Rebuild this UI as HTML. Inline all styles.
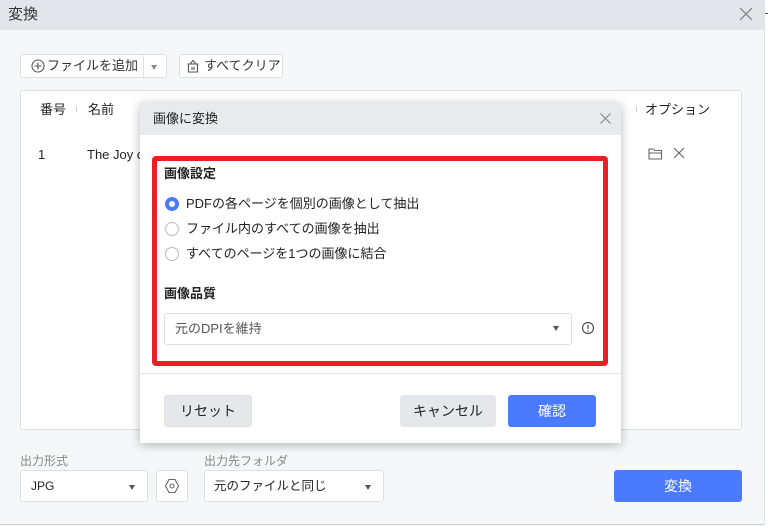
<!DOCTYPE html>
<html><head><meta charset="utf-8"><style>
*{box-sizing:border-box;margin:0;padding:0}
body{width:769px;height:527px;overflow:hidden;background:#fff;font-family:"Liberation Sans","Noto Sans CJK JP",sans-serif;font-size:13px;color:#222;position:relative}
.a{position:absolute;line-height:1.2}
.win{left:0;top:0;width:765px;height:525px;background:#f6f7f9;border-bottom:1px solid #ccc;border-right:1px solid #e2e2e2}
.tb{left:0;top:0;width:765px;height:30px;background:#e4e5ea}
.btn{border:1px solid #dcdfe5;border-radius:3px;background:#fff}
.sel{border:1px solid #dcdfe5;border-radius:3px;background:#fff}
.tri{width:0;height:0;border-left:3.5px solid transparent;border-right:3.5px solid transparent;border-top:5px solid #555}
.radio{width:14px;height:14px;border-radius:50%;border:1px solid #bbb;background:#fff}
</style></head><body>
<div class="a win"></div>
<div class="a tb"></div>
<div class="a" style="left:8px;top:6px;font-size:15px;color:#333">変換</div>
<svg class="a" style="left:739px;top:7px" width="14" height="14"><path d="M1 1L13 13M13 1L1 13" stroke="#888" stroke-width="1.3"/></svg>
<div class="a" style="left:765px;top:13px;width:3px;height:1px;background:#555"></div>

<div class="a btn" style="left:20px;top:54px;width:147px;height:24px"></div>
<div class="a" style="left:143px;top:55px;width:1px;height:22px;background:#dcdfe5"></div>
<svg class="a" style="left:31px;top:59px" width="14" height="14"><circle cx="7" cy="7" r="6" fill="none" stroke="#555" stroke-width="1.1"/><path d="M7 3.5V10.5M3.5 7H10.5" stroke="#555" stroke-width="1.1"/></svg>
<div class="a" style="left:47px;top:58px;color:#333">ファイルを追加</div>
<div class="a tri" style="left:151px;top:65px;border-top-color:#888"></div>
<div class="a btn" style="left:179px;top:54px;width:104px;height:24px"></div>
<svg class="a" style="left:186px;top:59px" width="14" height="14"><path d="M1.5 5H12.5M2.5 5V13H11.5V5M4 5L7 1.5L10 5M6 8V11M8 8V11" fill="none" stroke="#555" stroke-width="1.1"/></svg>
<div class="a" style="left:204px;top:58px;color:#333">すべてクリア</div>

<div class="a" style="left:20px;top:90px;width:722px;height:340px;background:#fff;border:1px solid #dcdfe5;border-radius:3px"></div>
<div class="a" style="left:40px;top:102px">番号</div>
<div class="a" style="left:76px;top:106px;width:1px;height:6px;background:#ccc"></div>
<div class="a" style="left:88px;top:102px">名前</div>
<div class="a" style="left:636px;top:106px;width:1px;height:6px;background:#ccc"></div>
<div class="a" style="left:645px;top:102px">オプション</div>
<div class="a" style="left:38px;top:147px">1</div>
<div class="a" style="left:87px;top:147px">The Joy o</div>
<svg class="a" style="left:648px;top:147px" width="15" height="13"><path d="M1 2H5.5L7 3.5H13.5V12H1Z M1 6H13.5" fill="none" stroke="#666" stroke-width="1.1"/></svg>
<svg class="a" style="left:673px;top:147px" width="12" height="12"><path d="M1 1L11 11M11 1L1 11" stroke="#666" stroke-width="1.2"/></svg>

<div class="a" style="left:20px;top:454px;color:#888;font-size:12px">出力形式</div>
<div class="a sel" style="left:20px;top:470px;width:128px;height:32px"></div>
<div class="a" style="left:31px;top:479px;font-size:12px">JPG</div>
<div class="a tri" style="left:129px;top:485px"></div>
<div class="a btn" style="left:156px;top:470px;width:32px;height:32px"></div>
<svg class="a" style="left:164px;top:478px" width="16" height="16"><path d="M5 1.5H11L14.5 8L11 14.5H5L1.5 8Z" fill="none" stroke="#666" stroke-width="1.1"/><circle cx="8" cy="8" r="2" fill="none" stroke="#666" stroke-width="1.1"/></svg>
<div class="a" style="left:204px;top:454px;color:#888;font-size:12px">出力先フォルダ</div>
<div class="a sel" style="left:204px;top:470px;width:180px;height:32px"></div>
<div class="a" style="left:214px;top:479px;font-size:12.5px">元のファイルと同じ</div>
<div class="a tri" style="left:365px;top:485px"></div>
<div class="a" style="left:614px;top:470px;width:128px;height:32px;background:#4a7aff;border-radius:3px;color:#fff;text-align:center;line-height:32px;font-size:14px">変換</div>

<div class="a" style="left:140px;top:103px;width:481px;height:340px;background:#fff;box-shadow:0 2px 10px rgba(0,0,0,.28)"></div>
<div class="a" style="left:140px;top:103px;width:481px;height:32px;background:#e8eaed"></div>
<div class="a" style="left:153px;top:111px">画像に変換</div>
<svg class="a" style="left:600px;top:113px" width="11" height="11"><path d="M0.5 0.5L10.5 10.5M10.5 0.5L0.5 10.5" stroke="#888" stroke-width="1.2"/></svg>

<div class="a" style="left:152px;top:156px;width:456px;height:210px;border:5px solid #ee1c25;border-radius:4px"></div>
<div class="a" style="left:164px;top:166px;font-weight:bold;font-size:13px">画像設定</div>
<div class="a radio" style="left:165px;top:197px;border:4px solid #4a7aff"></div>
<div class="a" style="left:186px;top:196px">PDFの各ページを個別の画像として抽出</div>
<div class="a radio" style="left:165px;top:222px"></div>
<div class="a" style="left:186px;top:221px">ファイル内のすべての画像を抽出</div>
<div class="a radio" style="left:165px;top:247px"></div>
<div class="a" style="left:186px;top:246px">すべてのページを1つの画像に結合</div>
<div class="a" style="left:164px;top:286px;font-weight:bold">画像品質</div>
<div class="a sel" style="left:164px;top:313px;width:408px;height:32px"></div>
<div class="a" style="left:175px;top:321px;color:#555">元のDPIを維持</div>
<div class="a tri" style="left:553px;top:326px"></div>
<svg class="a" style="left:581px;top:321px" width="14" height="14"><circle cx="7" cy="7" r="5.5" fill="none" stroke="#555" stroke-width="1.2"/><path d="M7 4V8" stroke="#555" stroke-width="1.3"/><circle cx="7" cy="10" r=".8" fill="#555"/></svg>
<div class="a" style="left:140px;top:373px;width:481px;height:1px;background:#e4e4e4"></div>
<div class="a" style="left:164px;top:395px;width:88px;height:32px;background:#e6e7eb;border:1px solid #dcdfe5;border-radius:3px;text-align:center;line-height:30px;font-size:14px">リセット</div>
<div class="a" style="left:400px;top:395px;width:96px;height:32px;background:#e6e7eb;border-radius:3px;text-align:center;line-height:32px;font-size:14px">キャンセル</div>
<div class="a" style="left:508px;top:395px;width:88px;height:32px;background:#4a7aff;border-radius:3px;color:#fff;text-align:center;line-height:32px;font-size:14px">確認</div>
</body></html>
